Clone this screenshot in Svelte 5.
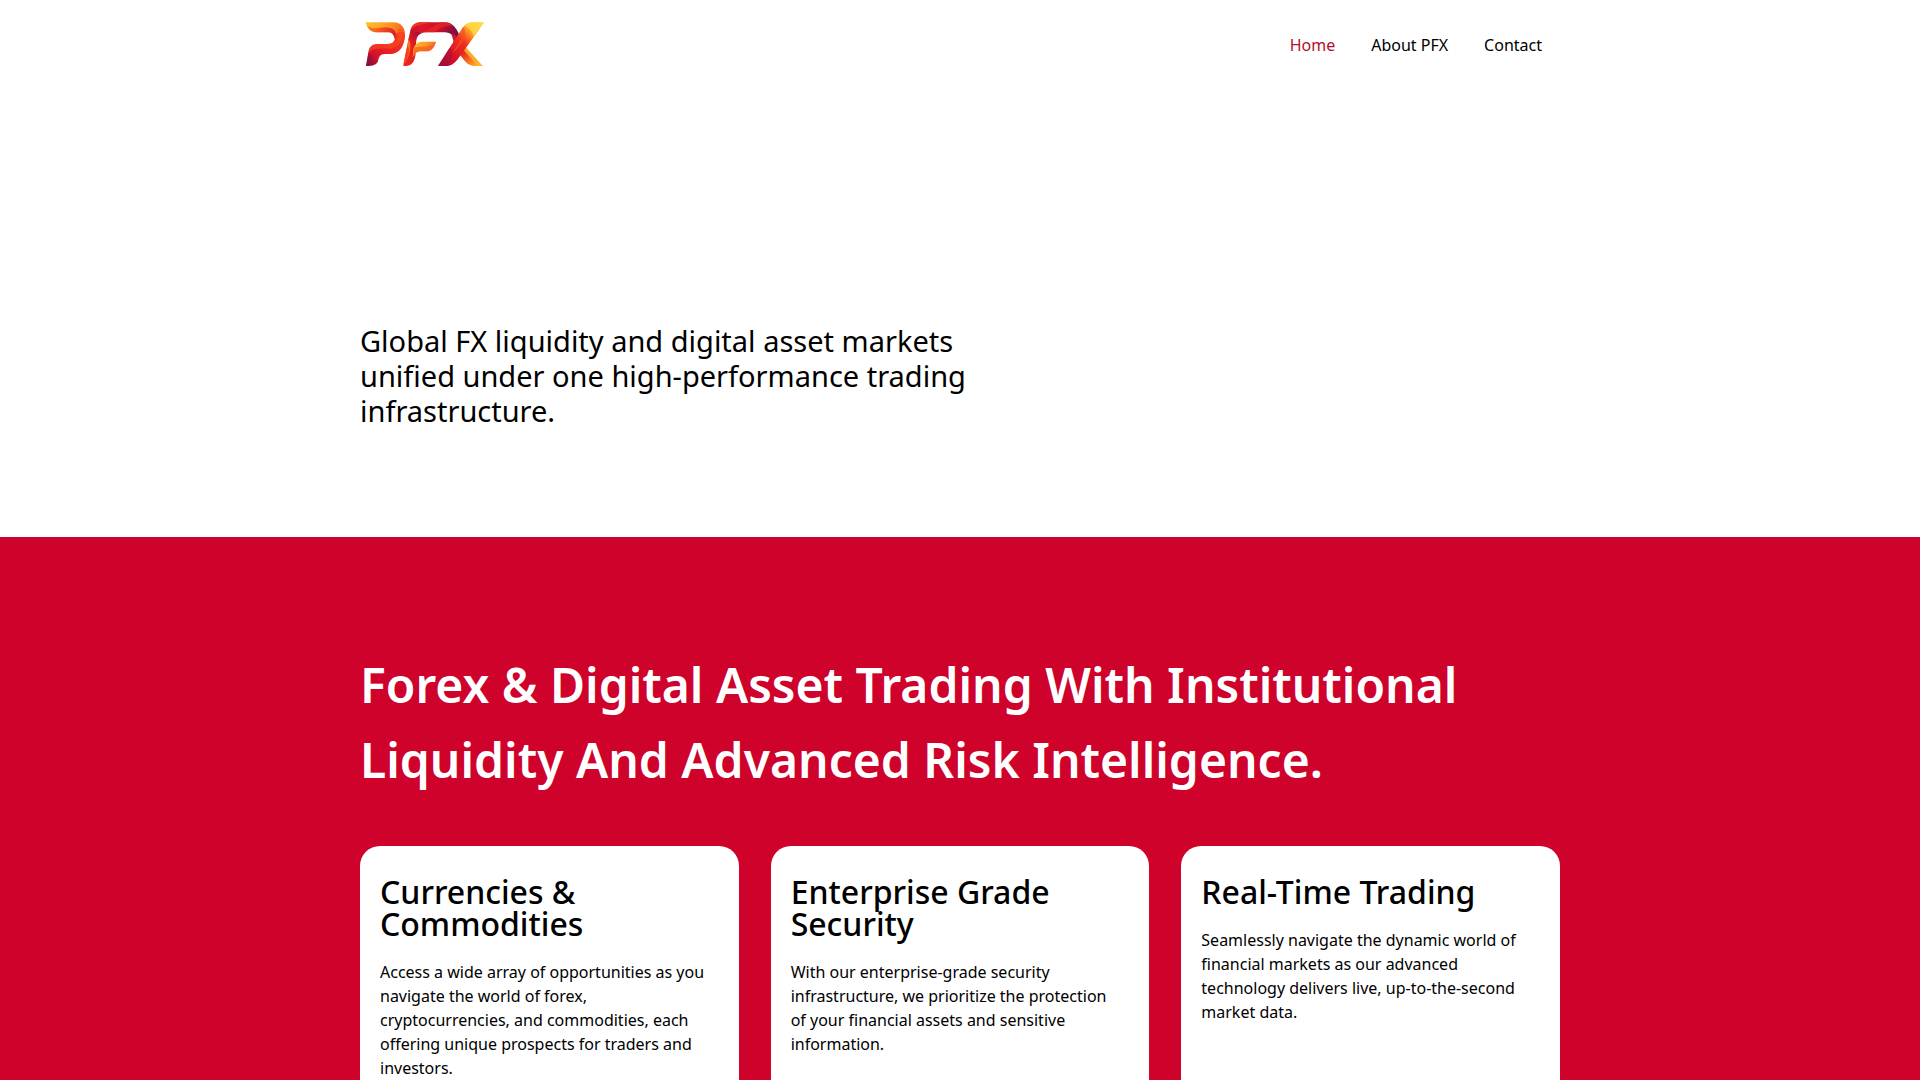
<script lang="ts">
  const links = [
    { label: "Home", href: "#home", active: true },
    { label: "About PFX", href: "#about", active: false },
    { label: "Contact", href: "#contact", active: false },
  ];

  const features = [
    {
      title: "Currencies & Commodities",
      text: "Access a wide array of opportunities as you navigate the world of forex, cryptocurrencies, and commodities, each offering unique prospects for traders and investors.",
    },
    {
      title: "Enterprise Grade Security",
      text: "With our enterprise-grade security infrastructure, we prioritize the protection of your financial assets and sensitive information.",
    },
    {
      title: "Real-Time Trading",
      text: "Seamlessly navigate the dynamic world of financial markets as our advanced technology delivers live, up-to-the-second market data.",
    },
  ];
</script>

<header class="container header">
  <a class="logo" href="#home" aria-label="PFX">
    <svg viewBox="30 15 390 180" width="130" height="60" aria-hidden="true">
      <defs>
        <linearGradient id="gold" x1="0" y1="0" x2="1" y2="0.5">
          <stop offset="0" stop-color="#fec62b" />
          <stop offset="0.5" stop-color="#fd9a25" />
          <stop offset="1" stop-color="#f7501e" />
        </linearGradient>
        <linearGradient id="ember" x1="0" y1="0" x2="1" y2="0.3">
          <stop offset="0" stop-color="#f98a1f" />
          <stop offset="0.5" stop-color="#f4511f" />
          <stop offset="1" stop-color="#d81a27" />
        </linearGradient>
        <linearGradient id="stem" x1="0.9" y1="0" x2="0" y2="1">
          <stop offset="0" stop-color="#f6401f" />
          <stop offset="0.5" stop-color="#ea1c26" />
          <stop offset="0.75" stop-color="#d00f2d" />
          <stop offset="1" stop-color="#6b0f45" />
        </linearGradient>
        <linearGradient id="wine" x1="0" y1="0" x2="1" y2="0.2">
          <stop offset="0" stop-color="#b50f35" />
          <stop offset="0.3" stop-color="#dd172a" />
          <stop offset="0.65" stop-color="#c20f31" />
          <stop offset="1" stop-color="#7d0d42" />
        </linearGradient>
        <linearGradient id="fstem" x1="0.7" y1="0" x2="0.1" y2="1">
          <stop offset="0" stop-color="#a50d36" />
          <stop offset="0.4" stop-color="#e3201f" />
          <stop offset="1" stop-color="#e8251f" />
        </linearGradient>
        <linearGradient id="rise" x1="1" y1="0" x2="0" y2="1">
          <stop offset="0" stop-color="#fedb31" />
          <stop offset="0.27" stop-color="#fd9a25" />
          <stop offset="0.45" stop-color="#f0301f" />
          <stop offset="0.75" stop-color="#d31029" />
          <stop offset="1" stop-color="#8a0f40" />
        </linearGradient>
        <linearGradient id="fall" x1="0" y1="0" x2="1" y2="1">
          <stop offset="0" stop-color="#c0102e" />
          <stop offset="0.5" stop-color="#ea2f20" />
          <stop offset="0.75" stop-color="#f8801f" />
          <stop offset="1" stop-color="#fed42f" />
        </linearGradient>
      </defs>

      <!-- first ribbon -->
      <path fill="url(#gold)" d="M46 37H132C154 38 166 54 165 76C163 94 155 108 145 117C147 94 139 69 117 67H78C60 66 53 53 46 37Z" />
      <path fill="url(#ember)" d="M50 46C68 60 82 53 104 52C130 52 140 62 141 90L134 112C137 91 134 69 117 67H78C63 66 56 58 50 46Z" />
      <path fill="url(#stem)" d="M165 74C164 112 145 132 121 132H104C90 132 87 141 84 153C81 164 70 168 48 168L55 127C58 108 68 103 83 102H114C130 101 137 90 137 74C146 62 159 63 165 74Z" />
      <path fill="#f7501e" opacity="0.55" d="M155 54C166 80 153 108 124 116C98 116 70 112 57 129C60 108 68 103 83 102H114C145 100 151 80 141 58Z" />
      <path fill="#8d103a" opacity="0.55" d="M56 128C70 138 66 160 48 168L55 131Z" />

      <!-- second ribbon -->
      <path fill="url(#wine)" d="M180 66C184 47 194 37 214 37H286C308 38 318 54 327 72L326 100C311 78 302 67 284 67H216C194 67 187 73 180 92L175 91Z" />
      <path fill="#f0351f" d="M181 61C187 44 197 37 214 37H248C218 43 196 46 181 61Z" />
      <path fill="#ea2420" opacity="0.8" d="M218 67C238 58 250 48 270 37H286C296 38 303 42 309 48C288 43 268 56 252 67Z" />
      <path fill="url(#fstem)" d="M177 80C188 62 205 66 226 67C199 72 199 86 198 107C198 126 197 147 188 158C182 166 173 168 160 168Z" />
      <path fill="#f9781f" d="M176 86C186 104 182 139 161 163L159 168L170 113Z" />
      <path fill="#f4401f" d="M173 106C181 118 178 144 161 162L168 128Z" />
      <path fill="url(#gold)" d="M190 119C195 99 205 95 222 95H258C253 113 245 124 227 124H211C201 124 194 130 188 142Z" />
      <path fill="#f4601f" opacity="0.75" d="M193 113C207 105 229 117 254 102C247 118 241 124 227 124H211C201 124 194 130 188 142Z" />

      <!-- crossed ribbons -->
      <path fill="url(#fall)" d="M304 70C318 73 326 91 336 103L398 168H378C359 168 351 161 342 150L316 117Z" />
      <path fill="#fdb52a" opacity="0.85" d="M340 103L398 168H386C371 155 353 135 334 112Z" />
      <path fill="url(#rise)" d="M402 37H366C352 38 343 46 335 57L264 168H288C304 168 313 160 322 149L359 98C373 79 388 58 402 37Z" />
      <path fill="#fee04a" opacity="0.75" d="M402 37L371 79C369 62 354 54 345 47C352 40 358 37 366 37Z" />
      <path fill="#f4511f" opacity="0.7" d="M339 52C352 66 346 98 307 130L325 101C335 85 338 73 336 57Z" />
      <path fill="#a30f38" opacity="0.5" d="M298 114C315 126 308 150 284 168H264Z" />
    </svg>
  </a>

  <nav class="nav" aria-label="Main">
    {#each links as link}
      <a href={link.href} class:active={link.active} aria-current={link.active ? "page" : undefined}>{link.label}</a>
    {/each}
  </nav>
</header>

<main>
  <section class="hero container" id="home">
    <p>Global FX liquidity and digital asset markets unified under one high-performance trading infrastructure.</p>
  </section>

  <section class="features" id="about">
    <div class="container">
      <h1>Forex & Digital Asset Trading With Institutional Liquidity And Advanced Risk Intelligence.</h1>
      <div class="cards">
        {#each features as feature}
          <article class="card">
            <h2>{feature.title}</h2>
            <p>{feature.text}</p>
          </article>
        {/each}
      </div>
    </div>
  </section>
</main>

<style>
  :global(body) {
    margin: 0;
    background: #fff;
    color: #000;
    font-family: "Noto Sans", sans-serif;
    font-size: 16px;
    line-height: 24px;
  }
  .container {
    max-width: 1200px;
    margin: 0 auto;
  }
  .header {
    display: flex;
    align-items: center;
    justify-content: space-between;
    min-height: 90px;
  }
  .logo,
  .logo svg {
    display: block;
  }
  .nav {
    display: flex;
  }
  .nav a {
    padding: 8px 18px;
    color: #000;
    text-decoration: none;
  }
  .nav a:hover,
  .nav a.active {
    color: #b3102b;
  }
  .hero {
    padding: 233px 0 109px;
  }
  .hero p {
    max-width: 620px;
    margin: 0;
    font-size: 29px;
    line-height: 35px;
  }
  .features {
    padding: 110px 0 100px;
    background: #ce022b;
  }
  h1 {
    margin: 0 0 49px;
    color: #fff;
    font-size: 48px;
    font-weight: 600;
    line-height: 75px;
  }
  .cards {
    display: grid;
    grid-template-columns: repeat(3, 1fr);
    gap: 32px;
  }
  .card {
    padding: 30px 28px 30px 20px;
    border-radius: 20px;
    background: #fff;
  }
  h2 {
    margin: 0 0 20px;
    font-size: 32px;
    font-weight: 500;
    line-height: 32px;
  }
  .card p {
    margin: 0;
  }
  @media (max-width: 1240px) {
    .container {
      padding-right: 20px;
      padding-left: 20px;
    }
    .cards {
      grid-template-columns: 1fr;
    }
  }
</style>
